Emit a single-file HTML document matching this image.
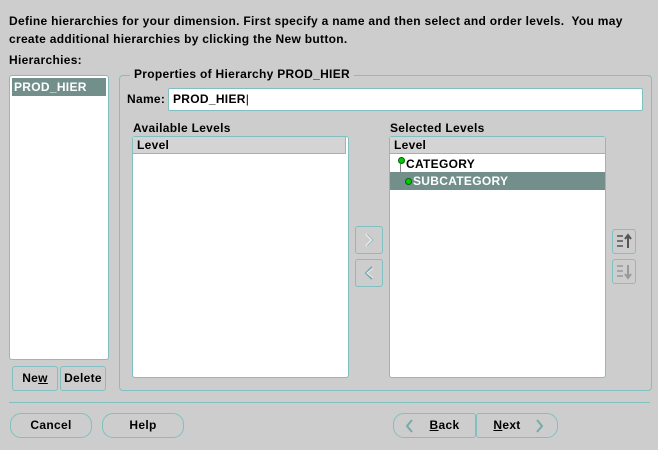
<!DOCTYPE html>
<html><head><style>
body{margin:0;width:658px;height:450px;background:#cdcdcd;position:relative;overflow:hidden;font-family:"Liberation Sans",sans-serif;font-size:12px;font-weight:bold;color:#000;letter-spacing:0.3px}
.a{position:absolute}
.box{position:absolute;background:#fff;border:1px solid #80c0c0;border-radius:3px}
.btn{position:absolute;border:1px solid #80c0c0;border-radius:3px;text-align:center;box-sizing:border-box}
.rb{border-radius:11px}
.hdr{position:absolute;left:0;right:0;top:0;height:16px;background:#d4d4d4;border-bottom:1px solid #80c0c0;padding-left:4px;line-height:17px}
svg{position:absolute}
.ic{left:0;top:0}
</style></head><body>
<div class="a" style="left:9px;top:12px;line-height:18px">Define hierarchies for your dimension. First specify a name and then select and order levels.&nbsp; You may<br>create additional hierarchies by clicking the New button.</div>
<div class="a" style="left:9px;top:53px">Hierarchies:</div>
<div class="box" style="left:9px;top:75px;width:98px;height:283px"><div class="a" style="left:2px;top:2px;width:94px;height:18px;background:#738f8c;color:#fff;line-height:19px;padding-left:2px;box-sizing:border-box">PROD_HIER</div></div>
<div class="btn" style="left:12px;top:366px;width:46px;height:25px;line-height:23px">Ne<u>w</u></div>
<div class="btn" style="left:60px;top:366px;width:46px;height:25px;line-height:23px">Delete</div>
<div class="a" style="left:119px;top:75px;width:531px;height:314px;border:1px solid #80c0c0;border-radius:4px"></div>
<div class="a" style="left:130px;top:67px;background:#cdcdcd;padding:0 4px">Properties of Hierarchy PROD_HIER</div>
<div class="a" style="left:127px;top:92px">Name:</div>
<div class="box" style="left:168px;top:88px;width:473px;height:21px;border-radius:2px"><span class="a" style="left:4px;top:3px">PROD_HIER<span style="font-weight:normal">|</span></span></div>
<div class="a" style="left:133px;top:121px">Available Levels</div>
<div class="box" style="left:132px;top:136px;width:215px;height:240px"><div class="hdr" style="right:2px;border-right:1px solid #80c0c0">Level</div></div>
<div class="a" style="left:390px;top:121px">Selected Levels</div>
<div class="box" style="left:389px;top:136px;width:215px;height:240px"><div class="hdr">Level</div>
<div class="a" style="left:8px;top:20px;width:5px;height:5px;border-radius:50%;background:#0c0;border:1px solid #060"></div>
<div class="a" style="left:10px;top:27px;width:1px;height:22px;background:#888"></div>
<div class="a" style="left:16px;top:18px;line-height:18px">CATEGORY</div>
<div class="a" style="left:0;top:35px;width:215px;height:18px;background:#738f8c;color:#fff"><div class="a" style="left:15px;top:6px;width:5px;height:5px;border-radius:50%;background:#0c0;border:1px solid #060"></div><span class="a" style="left:23px;top:2px">SUBCATEGORY</span></div>
</div>
<div class="btn" style="left:355px;top:226px;width:28px;height:28px"><svg class="ic" width="26" height="26"><path d="M10 7 L16 13 L10 19" stroke="#eee" stroke-width="2" fill="none"/><path d="M11 7 L17 13 L11 19" stroke="#9bb" stroke-width="1" fill="none"/></svg></div>
<div class="btn" style="left:355px;top:259px;width:28px;height:28px"><svg class="ic" width="26" height="26"><path d="M16 7 L10 13 L16 19" stroke="#7aa" stroke-width="2" fill="none"/><path d="M17 8 L11 13 L17 18" stroke="#eee" stroke-width="1" fill="none"/></svg></div>
<div class="btn" style="left:612px;top:229px;width:24px;height:25px"><svg class="ic" width="22" height="23"><path d="M4 6h6M4 11h6M4 16h6" stroke="#555" stroke-width="1.5"/><path d="M15 18V6M12 9l3-4 3 4" stroke="#555" stroke-width="2" fill="none"/></svg></div>
<div class="btn" style="left:612px;top:259px;width:24px;height:25px"><svg class="ic" width="22" height="23"><path d="M4 6h6M4 11h6M4 16h6" stroke="#999" stroke-width="1.5"/><path d="M15 5v12M12 14l3 4 3-4" stroke="#999" stroke-width="2" fill="none"/></svg></div>
<div class="a" style="left:9px;top:402px;width:641px;height:1px;background:#80c0c0"></div>
<div class="btn rb" style="left:10px;top:413px;width:82px;height:25px;line-height:23px">Cancel</div>
<div class="btn rb" style="left:102px;top:413px;width:82px;height:25px;line-height:23px">Help</div>
<div class="btn rb" style="left:393px;top:413px;width:83px;height:25px;line-height:23px;border-radius:11px 3px 3px 11px"><svg style="left:10px;top:5px" width="12" height="14"><path d="M8 1 L3 7 L8 13" stroke="#7aa" stroke-width="2" fill="none"/></svg><span style="margin-left:20px"><u>B</u>ack</span></div>
<div class="btn rb" style="left:476px;top:413px;width:82px;height:25px;line-height:23px;border-radius:3px 11px 11px 3px"><span style="margin-right:20px"><u>N</u>ext</span><svg style="right:12px;top:5px" width="12" height="14"><path d="M4 1 L9 7 L4 13" stroke="#7aa" stroke-width="2" fill="none"/></svg></div>
</body></html>
